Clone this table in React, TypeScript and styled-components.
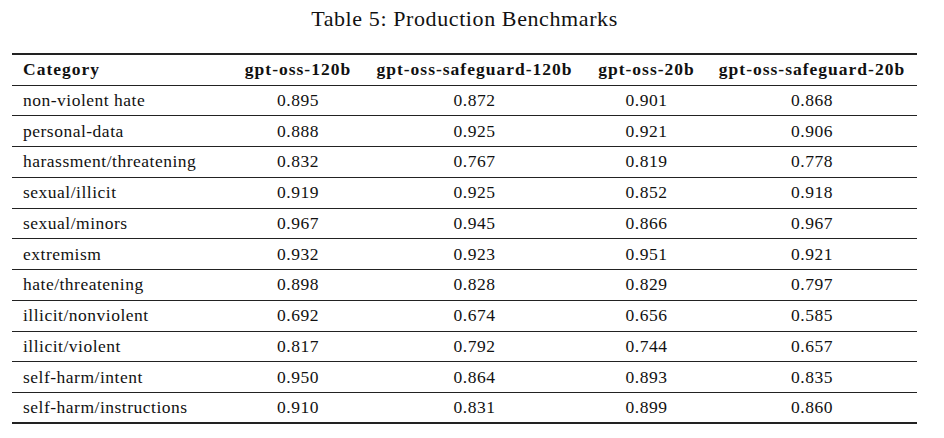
import styled, { createGlobalStyle } from "styled-components";

const GlobalStyle = createGlobalStyle`
  html, body {
    margin: 0;
    padding: 0;
    background: #ffffff;
  }
  body {
    font-family: "Liberation Serif", "Times New Roman", serif;
    color: #111;
  }
`;

const Page = styled.div`
  width: 944px;
  height: 438px;
  padding: 5px 0 0 12px;
  box-sizing: border-box;
`;

const Caption = styled.div`
  width: 905px;
  text-align: center;
  font-size: 22px;
  letter-spacing: 0.6px;
  line-height: 28px;
  margin-bottom: 20px;
`;

const Table = styled.table`
  width: 905px;
  border-collapse: collapse;
  table-layout: fixed;
  font-size: 17.5px;
  letter-spacing: 0.5px;
  border-top: 2px solid #222;
  border-bottom: 2px solid #222;
`;

const HeadCell = styled.th<{ $left?: boolean; $w: number }>`
  box-sizing: border-box;
  width: ${(p) => p.$w}px;
  height: 31px;
  padding: 0;
  padding-left: ${(p) => (p.$left ? "11px" : "0")};
  text-align: ${(p) => (p.$left ? "left" : "center")};
  font-weight: bold;
  letter-spacing: 1px;
  white-space: nowrap;
  border-bottom: 1px solid #222;
`;

const Row = styled.tr`
  & + & td {
    border-top: 1px solid #222;
  }
`;

const Cell = styled.td<{ $left?: boolean }>`
  box-sizing: border-box;
  height: 30.75px;
  padding: 0;
  padding-left: ${(p) => (p.$left ? "11px" : "0")};
  text-align: ${(p) => (p.$left ? "left" : "center")};
  white-space: nowrap;
`;

const columns = [
  { label: "Category", w: 221, left: true },
  { label: "gpt-oss-120b", w: 130 },
  { label: "gpt-oss-safeguard-120b", w: 223 },
  { label: "gpt-oss-20b", w: 121 },
  { label: "gpt-oss-safeguard-20b", w: 210 },
];

const rows: [string, string, string, string, string][] = [
  ["non-violent hate", "0.895", "0.872", "0.901", "0.868"],
  ["personal-data", "0.888", "0.925", "0.921", "0.906"],
  ["harassment/threatening", "0.832", "0.767", "0.819", "0.778"],
  ["sexual/illicit", "0.919", "0.925", "0.852", "0.918"],
  ["sexual/minors", "0.967", "0.945", "0.866", "0.967"],
  ["extremism", "0.932", "0.923", "0.951", "0.921"],
  ["hate/threatening", "0.898", "0.828", "0.829", "0.797"],
  ["illicit/nonviolent", "0.692", "0.674", "0.656", "0.585"],
  ["illicit/violent", "0.817", "0.792", "0.744", "0.657"],
  ["self-harm/intent", "0.950", "0.864", "0.893", "0.835"],
  ["self-harm/instructions", "0.910", "0.831", "0.899", "0.860"],
];

function App(): JSX.Element {
  return (
    <Page>
      <GlobalStyle />
      <Caption>Table 5: Production Benchmarks</Caption>
      <Table>
        <thead>
          <tr>
            {columns.map((c) => (
              <HeadCell key={c.label} $w={c.w} $left={c.left}>
                {c.label}
              </HeadCell>
            ))}
          </tr>
        </thead>
        <tbody>
          {rows.map((r) => (
            <Row key={r[0]}>
              {r.map((v, i) => (
                <Cell key={i} $left={i === 0}>
                  {v}
                </Cell>
              ))}
            </Row>
          ))}
        </tbody>
      </Table>
    </Page>
  );
}

export default App;
